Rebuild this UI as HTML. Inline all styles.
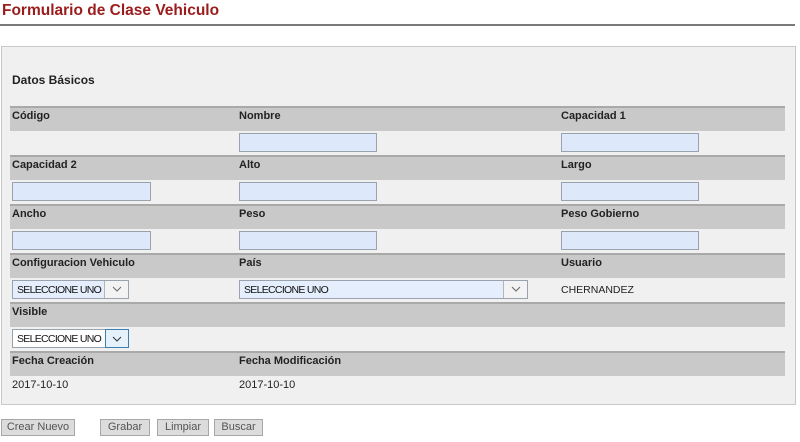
<!DOCTYPE html>
<html><head><meta charset="utf-8"><style>
*{box-sizing:border-box;margin:0;padding:0}
body{width:800px;height:442px;background:#fff;font-family:"Liberation Sans",Arial,sans-serif;position:relative;overflow:hidden}
.a{position:absolute}
h1{position:absolute;left:2px;top:2px;font-size:15.5px;color:#9b1c1c;font-weight:bold}
.hr{left:0;top:24px;width:795px;height:2px;background:#7a7a7a}
.panel{left:1px;top:46px;width:795px;height:359px;background:#f0f0f0;border:1px solid #c8c8c8}
.band{left:10px;width:775px;height:25px;background:#c9c9c9;border-top:2px solid #a9a9a9}
.lbl{font-size:11px;font-weight:bold;color:#222}
.txt{font-size:11px;color:#222}
.in{height:19px;background:#dde9fb;border:1px solid #9aa3ad}
.sel{height:19px;background:#e4eefc;border:1px solid #9aa3ad;font-size:10.5px;color:#111;padding:3px 0 0 4px;letter-spacing:-0.7px;white-space:nowrap;overflow:hidden}
.arr{position:absolute;right:0;top:0;width:24px;height:17px;border-left:1px solid #b5b5b5;background:#f3f3f3}
.arr svg{position:absolute;left:7px;top:5px}
.btn{top:419px;height:17px;background:#dcdcdc;border:1px solid #a7a7a7;font-size:11px;color:#555;text-align:center;line-height:15px}
</style></head><body>
<h1>Formulario de Clase Vehiculo</h1>
<div class="a hr"></div>
<div class="a panel"></div>
<div class="a lbl" style="left:12px;top:73px;font-size:12px">Datos Básicos</div>

<div class="a band" style="top:106px"></div>
<div class="a lbl" style="left:12px;top:110px">Código</div>
<div class="a lbl" style="left:239px;top:110px">Nombre</div>
<div class="a lbl" style="left:561px;top:110px">Capacidad 1</div>
<div class="a in" style="left:239px;top:133px;width:138px"></div>
<div class="a in" style="left:561px;top:133px;width:138px"></div>

<div class="a band" style="top:155px"></div>
<div class="a lbl" style="left:12px;top:159px">Capacidad 2</div>
<div class="a lbl" style="left:239px;top:159px">Alto</div>
<div class="a lbl" style="left:561px;top:159px">Largo</div>
<div class="a in" style="left:12px;top:182px;width:139px"></div>
<div class="a in" style="left:239px;top:182px;width:138px"></div>
<div class="a in" style="left:561px;top:182px;width:138px"></div>

<div class="a band" style="top:204px"></div>
<div class="a lbl" style="left:12px;top:208px">Ancho</div>
<div class="a lbl" style="left:239px;top:208px">Peso</div>
<div class="a lbl" style="left:561px;top:208px">Peso Gobierno</div>
<div class="a in" style="left:12px;top:231px;width:139px"></div>
<div class="a in" style="left:239px;top:231px;width:138px"></div>
<div class="a in" style="left:561px;top:231px;width:138px"></div>

<div class="a band" style="top:253px"></div>
<div class="a lbl" style="left:12px;top:257px">Configuracion Vehiculo</div>
<div class="a lbl" style="left:239px;top:257px">País</div>
<div class="a lbl" style="left:561px;top:257px">Usuario</div>
<div class="a sel" style="left:12px;top:280px;width:117px">SELECCIONE UNO<div class="arr"><svg width="10" height="6"><path d="M1 1L5 5L9 1" fill="none" stroke="#666" stroke-width="1"/></svg></div></div>
<div class="a sel" style="left:239px;top:280px;width:289px">SELECCIONE UNO<div class="arr"><svg width="10" height="6"><path d="M1 1L5 5L9 1" fill="none" stroke="#666" stroke-width="1"/></svg></div></div>
<div class="a txt" style="left:561px;top:284px;font-size:10.5px">CHERNANDEZ</div>

<div class="a band" style="top:302px"></div>
<div class="a lbl" style="left:12px;top:306px">Visible</div>
<div class="a sel" style="left:12px;top:329px;width:117px;background:#fff;overflow:visible">SELECCIONE UNO<div class="arr" style="border:1px solid #3c7fb1;background:#e5f1fb;top:-1px;right:-1px;height:19px"><svg width="10" height="6" style="top:6px;left:6px"><path d="M1 1L5 5L9 1" fill="none" stroke="#333" stroke-width="1"/></svg></div></div>

<div class="a band" style="top:351px"></div>
<div class="a lbl" style="left:12px;top:355px">Fecha Creación</div>
<div class="a lbl" style="left:239px;top:355px">Fecha Modificación</div>
<div class="a txt" style="left:12px;top:379px">2017-10-10</div>
<div class="a txt" style="left:239px;top:379px">2017-10-10</div>

<div class="a btn" style="left:1px;width:74px">Crear Nuevo</div>
<div class="a btn" style="left:100px;width:50px">Grabar</div>
<div class="a btn" style="left:157px;width:52px">Limpiar</div>
<div class="a btn" style="left:214px;width:49px">Buscar</div>
</body></html>
